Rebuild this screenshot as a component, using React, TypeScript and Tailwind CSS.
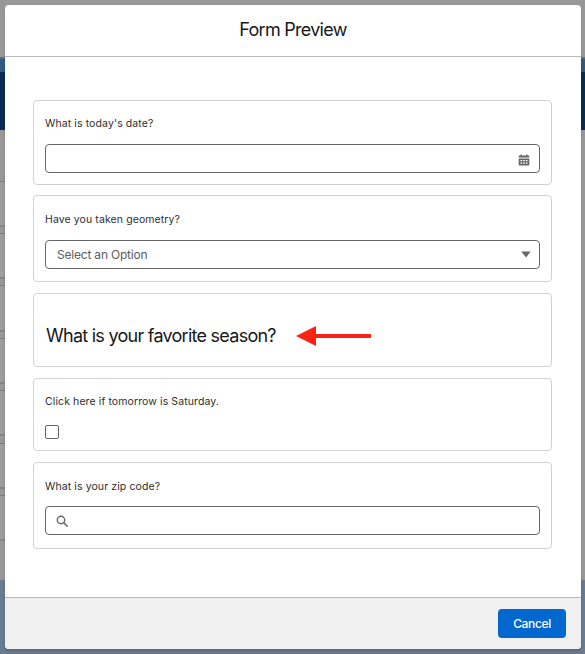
import React from 'react';

// Rows of the record list that show past the left edge of the modal
const PAGE_ROWS = ['h-[46px]', 'h-[46px]', 'h-[47px]', 'h-[46px]', 'h-[46px]', 'h-[46px]', 'h-[46px]'];

const ROW_GAPS = ['mb-[6px]', 'mb-[6px]', 'mb-[6px]', 'mb-[6px]', 'mb-[7px]', 'mb-[6px]', ''];

const CalendarIcon: React.FC = () => (
  <svg width="12" height="12" viewBox="0 0 12 12" fill="#666666" className="shrink-0">
    <path d="M2.500 0.500h1.400v1h4.200v-1h1.400v1h1c.5 0 .8.3.8.8v1.200H.7V2.300c0-.5.3-.8.8-.8h1z" />
    <path
      fillRule="evenodd"
      d="M.7 4.400h10.600v6.300c0 .5-.3.8-.8.8h-9c-.5 0-.8-.3-.8-.8zM2.500 6v1.200h1.700V6zM5.200 6v1.200h1.600V6zM7.800 6v1.200h1.700V6zM2.500 8.500v1.200h1.700V8.500zM5.200 8.500v1.200h1.600V8.500zM7.800 8.500v1.200h1.700V8.500z"
    />
  </svg>
);

const SearchIcon: React.FC = () => (
  <svg width="13" height="13" viewBox="0 0 13 13" fill="none" stroke="#666666" className="shrink-0">
    <circle cx="5" cy="5" r="3.700" strokeWidth="1.400" />
    <path d="M7.800 7.800L11.200 11.200" strokeWidth="1.600" strokeLinecap="round" />
  </svg>
);

const Card: React.FC<{ className: string; children: React.ReactNode }> = ({ className, children }) => (
  <section className={`rounded-[4px] border border-[#d2d2d2] px-[11px] ${className}`}>{children}</section>
);

const Label: React.FC<{ children: React.ReactNode }> = ({ children }) => (
  <div className="text-[10.5px] leading-4 tracking-[0.1px] text-[#2e2e2e]">{children}</div>
);

const App: React.FC = () => {
  return (
    <div className="relative h-[654px] w-[585px] overflow-hidden bg-[#989898] font-['Inter','Liberation_Sans',sans-serif]">
      {/* Dimmed page behind the modal */}
      <div className="h-[57px]" />
      <div className="h-[15px] border-t-2 border-[#5d6f80] bg-[#315b84]" />
      <div className="h-[58px] bg-[#092c56]" />
      <div className="h-[450px] w-[5px] pt-[51px]">
        {PAGE_ROWS.map((height, i) => (
          <div key={i} className={`border-t border-b-2 border-t-[#7c7c7c] border-b-[#858585] bg-[#9d9d9d] ${height} ${ROW_GAPS[i]}`} />
        ))}
      </div>
      <div className="h-[74px] bg-[#687b91]" />

      {/* Modal */}
      <div className="absolute top-[5px] left-[5px] flex h-[644px] w-[576px] flex-col overflow-hidden rounded-[4px] bg-white shadow-[0_2px_3px_rgba(0,0,0,0.16)]">
        <header className="flex h-[52px] shrink-0 items-center justify-center border-b border-[#b9b9b9] pb-[2px]">
          <h1 className="text-[18px] leading-6 tracking-[-0.73px] text-[#181818]">Form Preview</h1>
        </header>

        <main className="grow pt-[43px] pr-[29px] pl-7">
          <Card className="h-[85px] pt-[15px]">
            <Label>What is today's date?</Label>
            <div className="mt-3 flex h-[29px] items-center justify-end rounded-[4px] border border-[#666666] pt-[3px] pr-[9px]">
              <CalendarIcon />
            </div>
          </Card>

          <Card className="mt-[10px] h-[87px] pt-4">
            <Label>Have you taken geometry?</Label>
            <div className="mt-3 flex h-[29px] items-center justify-between rounded-[4px] border border-[#666666] pr-2 pl-[11px] text-[12px] tracking-[-0.2px] text-[#5c5c5c]">
              <span>Select an Option</span>
              <svg width="10" height="7" viewBox="0 0 10 7" fill="#666666">
                <path d="M0.300 0.500h9.400L5 6.500z" />
              </svg>
            </div>
          </Card>

          <Card className="mt-[11px] flex h-[74px] items-center pt-3">
            <h2 className="ml-px w-[250px] text-[18px] leading-6 tracking-[-0.74px] whitespace-nowrap text-[#181818]">What is your favorite season?</h2>
            <svg width="75" height="20" viewBox="0 0 75 20" fill="#fb2313">
              <path d="M0 10L20 0v8h55v4H20v8z" />
            </svg>
          </Card>

          <Card className="mt-[11px] h-[73px] pt-[15px]">
            <Label>Click here if tomorrow is Saturday.</Label>
            <div className="mt-[15px] size-[14px] rounded-[2px] border border-[#666666]" />
          </Card>

          <Card className="mt-[11px] h-[87px] pt-4">
            <Label>What is your zip code?</Label>
            <div className="mt-[11px] flex h-[29px] items-center rounded-[4px] border border-[#666666] pt-px pl-[10px]">
              <SearchIcon />
            </div>
          </Card>
        </main>

        <footer className="flex h-[52px] shrink-0 justify-end border-t border-[#b9b9b9] bg-[#f0f0f0] pt-[11px] pr-[15px]">
          <button className="h-[29px] w-[68px] rounded-[4px] bg-[#0267ce] text-[12px] font-medium tracking-[-0.35px] text-white">Cancel</button>
        </footer>
      </div>
    </div>
  );
};

export default App;
